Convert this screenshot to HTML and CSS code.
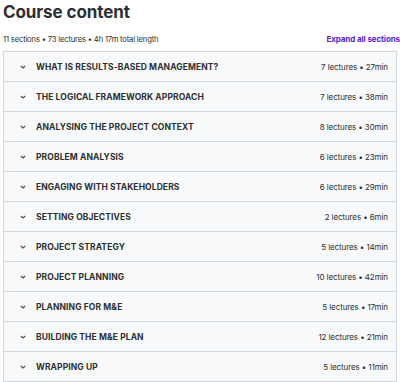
FILE: index.html
```html
<!DOCTYPE html>
<html lang="en">
<head>
  <meta charset="UTF-8">
  <title>Course content</title>
  <link rel="stylesheet" href="styles.css">
</head>
<body>

<h2 class="title">Course content</h2>

<div class="meta">
  <span>11 sections • 73 lectures • 4h 17m total length</span>
  <a href="#" class="expand">Expand all sections</a>
</div>

<ul class="sections">
  <li class="section"><span class="chev"><svg viewBox="0 0 10 10"><path d="M2.8 4 5 6 7.2 4"/></svg></span><span class="name">What is results-based management?</span><span class="info">7 lectures • 27min</span></li>
  <li class="section"><span class="chev"><svg viewBox="0 0 10 10"><path d="M2.8 4 5 6 7.2 4"/></svg></span><span class="name">The logical framework approach</span><span class="info">7 lectures • 38min</span></li>
  <li class="section"><span class="chev"><svg viewBox="0 0 10 10"><path d="M2.8 4 5 6 7.2 4"/></svg></span><span class="name">Analysing the project context</span><span class="info">8 lectures • 30min</span></li>
  <li class="section"><span class="chev"><svg viewBox="0 0 10 10"><path d="M2.8 4 5 6 7.2 4"/></svg></span><span class="name">Problem analysis</span><span class="info">6 lectures • 23min</span></li>
  <li class="section"><span class="chev"><svg viewBox="0 0 10 10"><path d="M2.8 4 5 6 7.2 4"/></svg></span><span class="name">Engaging with stakeholders</span><span class="info">6 lectures • 29min</span></li>
  <li class="section"><span class="chev"><svg viewBox="0 0 10 10"><path d="M2.8 4 5 6 7.2 4"/></svg></span><span class="name">Setting objectives</span><span class="info">2 lectures • 6min</span></li>
  <li class="section"><span class="chev"><svg viewBox="0 0 10 10"><path d="M2.8 4 5 6 7.2 4"/></svg></span><span class="name">Project strategy</span><span class="info">5 lectures • 14min</span></li>
  <li class="section"><span class="chev"><svg viewBox="0 0 10 10"><path d="M2.8 4 5 6 7.2 4"/></svg></span><span class="name">Project planning</span><span class="info">10 lectures • 42min</span></li>
  <li class="section"><span class="chev"><svg viewBox="0 0 10 10"><path d="M2.8 4 5 6 7.2 4"/></svg></span><span class="name">Planning for M&amp;E</span><span class="info">5 lectures • 17min</span></li>
  <li class="section"><span class="chev"><svg viewBox="0 0 10 10"><path d="M2.8 4 5 6 7.2 4"/></svg></span><span class="name">Building the M&amp;E plan</span><span class="info">12 lectures • 21min</span></li>
  <li class="section"><span class="chev"><svg viewBox="0 0 10 10"><path d="M2.8 4 5 6 7.2 4"/></svg></span><span class="name">Wrapping up</span><span class="info">5 lectures • 11min</span></li>
</ul>

</body>
</html>
```

FILE: styles.css
```css
* {
  margin: 0;
  padding: 0;
  box-sizing: border-box;
}

body {
  font-family: Inter, Roboto, sans-serif;
  background-color: #fff;
  color: #2d2f31;
  padding: 0 0 0 3px;
}

.title {
  font-size: 17px;
  font-weight: 700;
  line-height: 22px;
  padding-top: 1px;
  letter-spacing: -0.1px;
}

.meta {
  display: flex;
  justify-content: space-between;
  align-items: center;
  margin-top: 9px;
  height: 14px;
  font-size: 7.7px;
  letter-spacing: -0.2px;
}

.expand {
  color: #5624d0;
  font-weight: 700;
  text-decoration: none;
  font-size: 8px;
  letter-spacing: -0.1px;
}

.sections {
  list-style: none;
  margin-top: 5px;
  width: 394px;
  border: 1px solid #d1d7dc;
  border-bottom: none;
}

.section {
  display: flex;
  align-items: center;
  height: 30px;
  padding: 0 8px 0 14px;
  background-color: #f7f9fa;
  border-bottom: 1px solid #d1d7dc;
}

.chev {
  display: flex;
  width: 10px;
  height: 10px;
  margin-right: 8px;
}

.chev svg {
  width: 10px;
  height: 10px;
  fill: none;
  stroke: #4a4d50;
  stroke-width: 1.1;
}

.name {
  flex: 1;
  font-size: 8.5px;
  font-weight: 700;
  text-transform: uppercase;
  letter-spacing: 0.1px;
}

.info {
  font-size: 8px;
  color: #2d2f31;
  letter-spacing: -0.1px;
}
```
